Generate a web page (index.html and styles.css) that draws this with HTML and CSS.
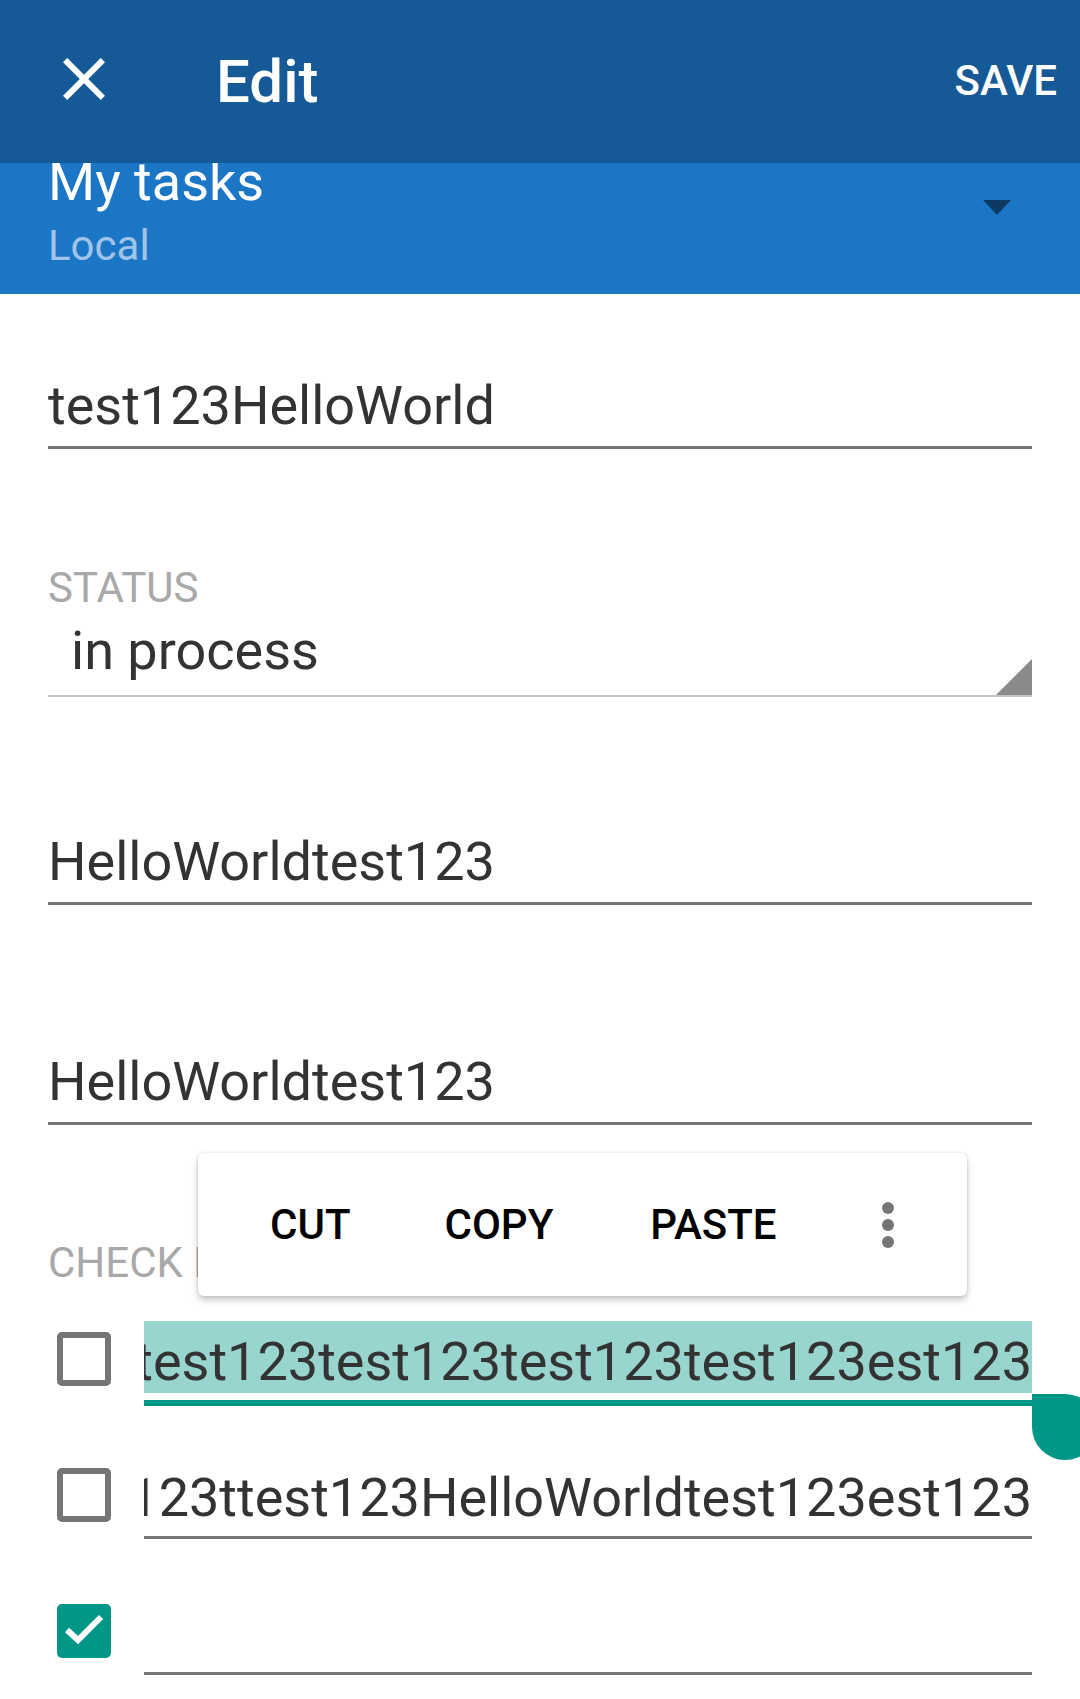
FILE: index.html
```html
<!DOCTYPE html>
<html lang="en">
<head>
<meta charset="utf-8">
<title>Edit</title>
<link rel="stylesheet" href="styles.css">
</head>
<body>
<div class="screen">
  <header class="toolbar">
    <svg class="close" viewBox="0 0 24 24" width="72" height="72"><path d="M19 6.41L17.59 5 12 10.59 6.41 5 5 6.41 10.59 12 5 17.59 6.41 19 12 13.41 17.59 19 19 17.59 13.41 12z" fill="#ffffff"/></svg>
    <h1 class="title">Edit</h1>
    <span class="save">SAVE</span>
  </header>
  <div class="listbar">
    <div class="list-info">
      <div class="list-name">My tasks</div>
      <div class="list-account">Local</div>
    </div>
    <span class="list-caret"></span>
  </div>
  <main class="form">
    <div class="field f1"><div class="field-text">test123HelloWorld</div></div>
    <div class="label status-label">STATUS</div>
    <div class="spinner"><div class="spinner-text">in process</div><span class="spinner-arrow"></span></div>
    <div class="field f3"><div class="field-text">HelloWorldtest123</div></div>
    <div class="field f4"><div class="field-text">HelloWorldtest123</div></div>
    <div class="label check-label">CHECK LIST</div>

    <div class="check-row first">
      <div class="box-col"><span class="box"></span></div>
      <div class="check-field focused"><div class="check-text selected"><span>test123test123test123test123est123</span></div></div>
    </div>
    <div class="check-row">
      <div class="box-col"><span class="box"></span></div>
      <div class="check-field"><div class="check-text"><span>test123ttest123HelloWorldtest123est123</span></div></div>
    </div>
    <div class="check-row">
      <div class="box-col"><span class="box checked"><svg viewBox="0 0 54 54" width="54" height="54"><polyline points="10,26 21,36 44,13" fill="none" stroke="#ffffff" stroke-width="6"/></svg></span></div>
      <div class="check-field"><div class="check-text"><span></span></div></div>
    </div>
  </main>

  <div class="text-popup">
    <span class="pop-item cut">CUT</span>
    <span class="pop-item copy">COPY</span>
    <span class="pop-item paste">PASTE</span>
    <span class="pop-more"><i></i><i></i><i></i></span>
  </div>
  <span class="handle"></span>
</div>
</body>
</html>
```
FILE: styles.css
```css
html, body {
  margin: 0;
  padding: 0;
}
body {
  width: 1080px;
  height: 1699px;
  overflow: hidden;
  background: #ffffff;
  font-family: Roboto, "Noto Sans", "Liberation Sans", sans-serif;
}
.screen {
  position: relative;
  width: 1080px;
  height: 1699px;
  overflow: hidden;
}

/* toolbar */
.toolbar {
  display: flex;
  align-items: flex-start;
  height: 163px;
  box-sizing: border-box;
  padding: 0 23px 0 48px;
  background: #155996;
  color: #ffffff;
}
.close {
  display: block;
  flex: none;
  width: 72px;
  height: 72px;
  margin-top: 43px;
}
.title {
  flex: 1;
  margin: 47px 0 0 96px;
  font-size: 60px;
  font-weight: 500;
  line-height: 70px;
}
.save {
  margin-top: 56px;
  font-size: 42px;
  font-weight: 500;
  line-height: 50px;
}

/* list selector */
.listbar {
  display: flex;
  align-items: flex-start;
  height: 131px;
  box-sizing: border-box;
  padding: 0 69px 0 48px;
  background: #1b76c6;
  overflow: hidden;
}
.list-info {
  flex: 1;
}
.list-name {
  font-size: 54px;
  line-height: 38px;
  color: #ffffff;
}
.list-account {
  margin-top: 19px;
  font-size: 42px;
  line-height: 52px;
  color: #a0c4e8;
}
.list-caret {
  margin-top: 37px;
  width: 0;
  height: 0;
  border-left: 14.5px solid transparent;
  border-right: 14.5px solid transparent;
  border-top: 15px solid #0d3a63;
}

/* form */
.form {
  padding: 0 48px;
}
.field {
  padding-bottom: 8px;
  border-bottom: 3px solid #757575;
}
.field-text {
  font-size: 54px;
  line-height: 64px;
  color: #333333;
  white-space: nowrap;
}
.f1 { margin-top: 80px; }
.f3 { margin-top: 133px; }
.f4 { margin-top: 145px; }

.label {
  font-size: 42px;
  line-height: 50px;
  color: #a8a8a8;
  white-space: nowrap;
}
.status-label { margin-top: 114px; }
.check-label { margin-top: 113px; }

.spinner {
  display: flex;
  margin-top: 6px;
  border-bottom: 2px solid #c4c4c4;
}
.spinner-text {
  flex: 1;
  padding: 0 0 12px 23px;
  font-size: 54px;
  line-height: 64px;
  color: #333333;
}
.spinner-arrow {
  align-self: flex-end;
  width: 0;
  height: 0;
  border-left: 36px solid transparent;
  border-bottom: 36px solid #8a8a8a;
}

/* checklist */
.check-row {
  display: flex;
  margin-top: 54px;
}
.check-row.first {
  margin-top: 33px;
}
.box-col {
  flex: none;
  width: 96px;
}
.box {
  display: block;
  width: 54px;
  height: 54px;
  margin: 11px 0 0 9px;
  box-sizing: border-box;
  border: 6px solid #757575;
  border-radius: 5px;
}
.box.checked {
  border: none;
  background: #009688;
}
.box.checked svg {
  display: block;
}
.check-field {
  flex: 1;
  min-width: 0;
  padding-bottom: 7px;
  border-bottom: 3px solid #757575;
}
.check-field.focused {
  border-bottom-color: #009688;
  box-shadow: 0 3px 0 #009688;
}
.check-text {
  display: flex;
  justify-content: flex-end;
  height: 72px;
  overflow: hidden;
  font-size: 54px;
  line-height: 81px;
  color: #333333;
  white-space: nowrap;
}
.check-text.selected {
  background: #99d5cf;
}

/* floating text toolbar */
.text-popup {
  position: absolute;
  left: 198px;
  top: 1153px;
  width: 769px;
  height: 143px;
  box-sizing: border-box;
  padding-left: 72px;
  display: flex;
  align-items: center;
  background: #ffffff;
  border-radius: 6px;
  box-shadow: 0 4px 7px rgba(0, 0, 0, 0.22), 0 0 3px rgba(0, 0, 0, 0.12);
}
.pop-item {
  font-size: 42px;
  font-weight: 500;
  line-height: 50px;
  color: #000000;
}
.copy { margin-left: 94px; }
.paste { margin-left: 97px; }
.pop-more {
  display: flex;
  flex-direction: column;
  gap: 5px;
  margin-left: 105px;
}
.pop-more i {
  display: block;
  width: 12px;
  height: 12px;
  border-radius: 50%;
  background: #757575;
}

/* selection handle */
.handle {
  position: absolute;
  left: 1032px;
  top: 1394px;
  width: 66px;
  height: 66px;
  background: #009688;
  border-radius: 0 50% 50% 50%;
}
```
